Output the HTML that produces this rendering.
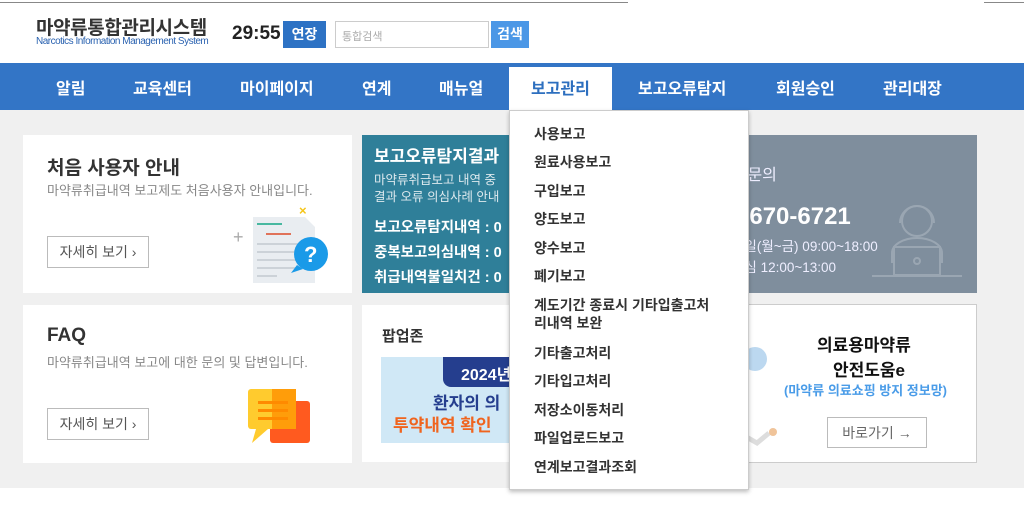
<!DOCTYPE html>
<html><head><meta charset="utf-8">
<style>
*{margin:0;padding:0;box-sizing:border-box}
body{width:1024px;height:505px;overflow:hidden;background:#fff;font-family:"Liberation Sans","Noto Sans CJK KR",sans-serif;position:relative}
.abs{position:absolute}
.topl{top:2px;height:1px;background:#888}
.hdr{top:0;left:0;width:1024px;height:63px;background:#fff}
.nav{top:63px;left:0;width:1024px;height:47px;background:#3375c6}
.nav span{position:absolute;top:12px;color:#fff;font-size:16px;font-weight:bold}
.main{top:110px;left:0;width:1024px;height:378px;background:#f0f0f0}
.card{background:#fff}
.btn{border:1px solid #bbb;background:#fff;color:#555;font-size:14px;text-align:center;line-height:30px}
.dd{left:509px;top:110px;width:240px;height:380px;background:#fff;border:1px solid #ccc;box-shadow:0 2px 4px rgba(0,0,0,.25)}
.dd div{position:absolute;left:24px;font-size:14px;color:#333;font-weight:bold;line-height:18px}
</style></head><body>
<div class="abs hdr"></div>
<div class="abs topl" style="left:0;width:628px"></div>
<div class="abs topl" style="left:984px;width:40px"></div>
<div class="abs" style="left:36px;top:13px;font-size:19px;font-weight:bold;color:#333;letter-spacing:-0.4px">마약류통합관리시스템</div>
<div class="abs" style="left:36px;top:36px;font-size:10px;color:#2a62b0;letter-spacing:-0.5px;white-space:nowrap">Narcotics Information Management System</div>
<div class="abs" style="left:232px;top:23px;font-size:19px;font-weight:bold;color:#222">29:55</div>
<div class="abs" style="left:283px;top:21px;width:43px;height:27px;background:#2d72c4;color:#fff;font-size:14px;font-weight:bold;text-align:center;line-height:27px">연장</div>
<div class="abs" style="left:335px;top:21px;width:154px;height:27px;border:1px solid #ccc;font-size:11px;color:#aaa;padding:6px 0 0 6px">통합검색</div>
<div class="abs" style="left:491px;top:21px;width:38px;height:27px;background:#4b97e6;color:#fff;font-size:14px;font-weight:bold;text-align:center;line-height:27px">검색</div>
<div class="abs nav">
<span style="left:56px">알림</span><span style="left:133px">교육센터</span><span style="left:240px">마이페이지</span><span style="left:362px">연계</span><span style="left:439px">매뉴얼</span>
<div style="position:absolute;left:509px;top:4px;width:103px;height:43px;background:#fff"></div>
<span style="left:531px;color:#2d6fbf">보고관리</span><span style="left:638px">보고오류탐지</span><span style="left:776px">회원승인</span><span style="left:883px">관리대장</span>
</div>
<div class="abs main"></div>
<div class="abs card" style="left:23px;top:135px;width:329px;height:158px">
<div class="abs" style="left:24px;top:18px;font-size:19px;font-weight:bold;color:#333">처음 사용자 안내</div>
<div class="abs" style="left:24px;top:45px;font-size:13px;color:#888">마약류취급내역 보고제도 처음사용자 안내입니다.</div>
<div class="abs btn" style="left:24px;top:101px;width:102px;height:32px">자세히 보기 ›</div>
<svg class="abs" style="left:208px;top:64px" width="110" height="85"><text x="2" y="44" font-size="18" fill="#aaa" font-family="Liberation Sans">+</text><path d="M22 18h52l10 10v56H22z" fill="#e9edf1"/><rect x="26" y="24" width="25" height="2" fill="#48b8a0"/><rect x="35" y="34" width="25" height="2" fill="#e0735a"/><g fill="#ccd2d8"><rect x="26" y="44" width="45" height="2"/><rect x="26" y="52" width="45" height="2"/><rect x="26" y="60" width="40" height="2"/><rect x="26" y="68" width="45" height="2"/><rect x="26" y="76" width="20" height="2"/></g><circle cx="80" cy="55" r="17" fill="#1a9ae8"/><path d="M66 66l-6 8 12-4z" fill="#1a9ae8"/><text x="73" y="63" font-size="22" font-weight="bold" fill="#fff" font-family="Liberation Sans">?</text><text x="68" y="16" font-size="13" font-weight="bold" fill="#f5c518" font-family="Liberation Sans">×</text></svg>
</div>
<div class="abs" style="left:362px;top:135px;width:260px;height:158px;background:#2f7f99;color:#fff">
<div class="abs" style="left:12px;top:7px;font-size:17px;font-weight:bold;white-space:nowrap">보고오류탐지결과</div>
<div class="abs" style="left:12px;top:37px;font-size:12.5px;line-height:17px;color:#dde9ee;white-space:nowrap">마약류취급보고 내역 중<br>결과 오류 의심사례 안내</div>
<div class="abs" style="left:12px;top:81px;font-size:14.5px;font-weight:bold;line-height:25px;white-space:nowrap">보고오류탐지내역 : 0<br>중복보고의심내역 : 0<br>취급내역불일치건 : 0</div>
</div>
<div class="abs" style="left:622px;top:135px;width:355px;height:158px;background:#7f8e9d;color:#fff">
<div class="abs" style="left:96px;top:26px;font-size:16px;color:#eef">대표문의</div>
<div class="abs" style="left:114px;top:68px;font-size:24px;font-weight:bold">1670-6721</div>
<div class="abs" style="left:110px;top:101px;font-size:13.5px;line-height:21px;color:#eef;white-space:nowrap">평일(월~금) 09:00~18:00<br>점심 12:00~13:00</div>
<svg class="abs" style="left:250px;top:58px" width="90" height="90" fill="none" stroke="#9aa6b2" stroke-width="2"><circle cx="45" cy="28" r="15"/><path d="M28 30a17 17 0 0 1 34 0"/><path d="M20 70v-10a25 15 0 0 1 50 0v10"/><rect x="22" y="54" width="46" height="28"/><circle cx="45" cy="68" r="3"/><path d="M0 83h90"/></svg>
</div>
<div class="abs card" style="left:23px;top:305px;width:329px;height:158px">
<div class="abs" style="left:24px;top:20px;font-size:19px;font-weight:bold;color:#333">FAQ</div>
<div class="abs" style="left:24px;top:47px;font-size:13px;color:#888">마약류취급내역 보고에 대한 문의 및 답변입니다.</div>
<div class="abs btn" style="left:24px;top:103px;width:102px;height:32px">자세히 보기 ›</div>
<svg class="abs" style="left:225px;top:84px" width="66" height="56"><rect x="22" y="12" width="40" height="42" rx="3" fill="#ff5a1f"/><rect x="0" y="0" width="48" height="40" rx="3" fill="#ffcb2e"/><rect x="24" y="0" width="24" height="40" fill="#ff9d0a"/><path d="M8 40l-4 14 16-14z" fill="#ffcb2e"/><g fill="#ff8a00"><rect x="10" y="12" width="30" height="3"/><rect x="10" y="20" width="30" height="3"/><rect x="10" y="28" width="30" height="3"/></g></svg>
</div>
<div class="abs card" style="left:362px;top:305px;width:260px;height:157px">
<div class="abs" style="left:20px;top:20px;font-size:15px;font-weight:bold;color:#333">팝업존</div>
<div class="abs" style="left:19px;top:52px;width:200px;height:86px;background:#d0e8f6;overflow:hidden">
<div class="abs" style="left:62px;top:0;width:140px;height:30px;background:#253e8e;border-radius:0 0 0 8px;color:#fff;font-size:16px;font-weight:bold;padding:4px 0 0 18px">2024년</div>
<div class="abs" style="left:52px;top:32px;font-size:17px;font-weight:bold;color:#253e8e;white-space:nowrap">환자의 의</div>
<div class="abs" style="left:12px;top:54px;font-size:17px;font-weight:bold;color:#f0641e;white-space:nowrap">투약내역 확인</div>
</div>
</div>
<div class="abs card" style="left:622px;top:304px;width:355px;height:159px;border:1px solid #ccc">
<svg class="abs" style="left:120px;top:30px" width="40" height="120"><circle cx="12" cy="24" r="12" fill="#bcd8f0"/><path d="M0 100l14 8 12-10" stroke="#ddd" stroke-width="5" fill="none"/><circle cx="30" cy="97" r="4" fill="#f0c49a"/></svg>
<div class="abs" style="left:194px;top:26px;font-size:17px;font-weight:bold;color:#111">의료용마약류</div>
<div class="abs" style="left:210px;top:51px;font-size:17px;font-weight:bold;color:#111">안전도움e</div>
<div class="abs" style="left:161px;top:75px;font-size:13px;font-weight:bold;color:#4a9ce8">(마약류 의료쇼핑 방지 정보망)</div>
<div class="abs btn" style="left:204px;top:112px;width:100px;height:31px;color:#666">바로가기 →</div>
</div>
<div class="abs dd">
<div style="top:14px">사용보고</div><div style="top:42px">원료사용보고</div><div style="top:71px">구입보고</div><div style="top:99px">양도보고</div><div style="top:128px">양수보고</div><div style="top:156px">폐기보고</div>
<div style="top:185px">계도기간 종료시 기타입출고처<br>리내역 보완</div>
<div style="top:233px">기타출고처리</div><div style="top:261px">기타입고처리</div><div style="top:290px">저장소이동처리</div><div style="top:318px">파일업로드보고</div><div style="top:347px">연계보고결과조회</div>
</div>
</body></html>
